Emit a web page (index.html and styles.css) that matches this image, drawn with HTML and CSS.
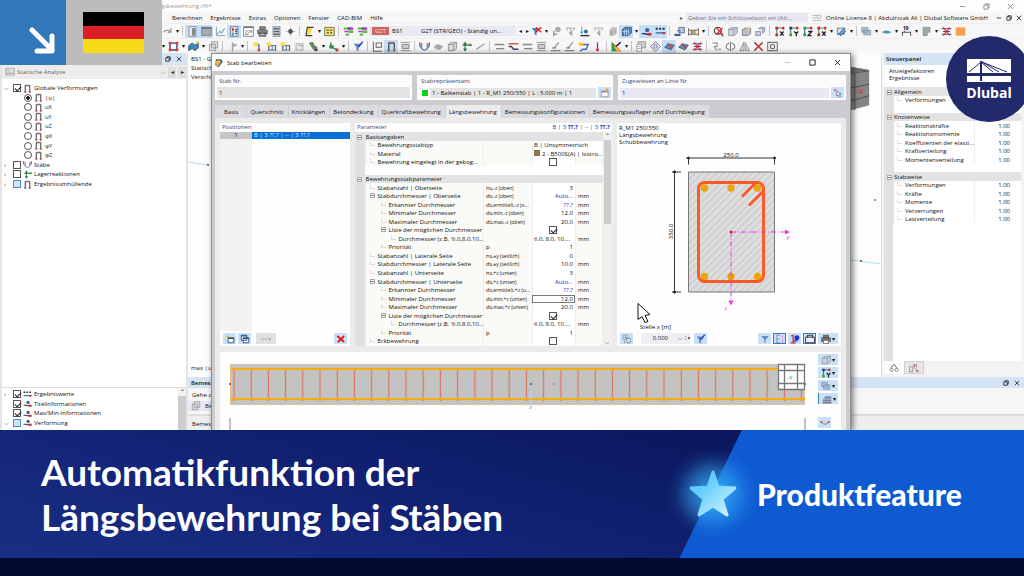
FILE: index.html
```html
<!DOCTYPE html>
<html lang="de">
<head>
<meta charset="utf-8">
<meta name="viewport" content="width=device-width, initial-scale=1">
<title>Automatikfunktion der Längsbewehrung bei Stäben</title>
<link rel="stylesheet" href="styles.css">
</head>
<body>
<div class="app">
  <header class="titlebar">
    <span class="file">gsbewehrung.rf6*</span>
    <span class="win-controls big"><button aria-label="Minimieren" data-icon="min"></button><button aria-label="Wiederherstellen" data-icon="restore"></button><button aria-label="Schließen" data-icon="close"></button></span>
  </header>
  <nav class="menubar">
    <a href="#">Berechnen</a><a href="#">Ergebnisse</a><a href="#">Extras</a><a href="#">Optionen</a><a href="#">Fenster</a><a href="#">CAD-BIM</a><a href="#">Hilfe</a>
    <span class="search-mark">▸</span>
    <input class="search" aria-label="Suche" value="Geben Sie ein Schlüsselwort ein (Alt...">
    <span class="ico" data-icon="find"></span>
    <span class="license">Online License 8 | Abdulrzzak Ali | Dlubal Software GmbH</span>
    <span class="win-controls"><button aria-label="Minimieren" data-icon="min"></button><button aria-label="Wiederherstellen" data-icon="restore"></button><button aria-label="Schließen" data-icon="close"></button></span>
  </nav>
  <div class="toolbar" id="toolbar-a"></div>
  <div class="toolbar" id="toolbar-b"></div>

  <main class="workspace">
    <aside class="navigator">
      <div class="dock-head"><button aria-label="Andocken" data-icon="restore"></button><button aria-label="Schließen" data-icon="close"></button></div>
      <div class="nav-select"><span class="ico" data-icon="disk"></span><span class="grow">Statische Analyse</span><span class="chev">⌵</span><button aria-label="Zurück">◂</button><button aria-label="Weiter">▸</button></div>
      <ul class="tree" id="tree-results"></ul>
      <div class="tree-lower">
        <ul class="tree" id="tree-display"></ul>
        <div class="vscroll"><span>⌃</span><i></i></div>
      </div>
    </aside>

    <section class="stage">
      <div class="view-row">
        <div class="viewport">
          <p class="view-info">BS1 - GZT<br>Statische<br>Verschieb.</p>
          <svg class="cube" viewBox="0 0 40 48"><path d="M0 2l22-2 18 3v37L10 48H0z" fill="#858585"/><path d="M0 10l25-4 15-2M0 24l26-3 14-3M0 38l26-4 14-4M25 5v40" stroke="#4c4c4c" fill="none"/><path d="M0 2l22-2 18 3-14 3H0z" fill="#6c6c6c"/><text x="27" y="28" font-size="8" fill="#d22">-X</text></svg>
          <svg class="member-left" viewBox="0 0 24 6"><path d="M0 1l20 3" stroke="#a9e3e8"/><circle cx="20" cy="4" r="1" fill="#555"/></svg>
          <svg class="member-right" viewBox="0 0 30 70"><path d="M0 62l30 4" stroke="#a9e3e8"/><circle cx="24" cy="2" r="1" fill="#777"/><circle cx="10" cy="63" r="1" fill="#555"/></svg>
          <p class="view-max">max |u|</p>
        </div>
        <aside class="panel">
          <h2>Steuerpanel</h2>
          <p>Anzeigefaktoren<br>Ergebnisse</p>
          <div class="factor-area"><table class="factors"><colgroup><col class="c-gut"><col><col class="c-num"></colgroup><tbody id="factors"></tbody></table></div>
          <div class="panel-tabs"><button class="on" aria-label="Faktoren" data-icon="scale"></button><button aria-label="Filter" data-icon="filtertab"></button></div>
        </aside>
      </div>
      <section class="results">
        <div class="results-head"><b>Bemessung</b><span><button aria-label="Andocken" data-icon="restore"></button><button aria-label="Schließen" data-icon="close"></button></span></div>
        <p>Gehe zu</p>
        <p class="results-select"><span class="ico" data-icon="copy"></span>Beton</p>
        <p class="results-foot">Bemessung</p>
      </section>
    </section>
  </main>

  <div class="dialog" role="dialog" aria-labelledby="dlg-title">
    <div class="dlg-title"><span class="ico" data-icon="member"></span><span class="grow" id="dlg-title">Stab bearbeiten</span><span class="win-controls dlg-controls"><button class="dim" aria-label="Minimieren" data-icon="min"></button><button aria-label="Maximieren" data-icon="max"></button><button aria-label="Schließen" data-icon="close"></button></span></div>
    <div class="dlg-body">
      <div class="fields">
        <div class="field"><label for="f-no">Stab Nr.</label><div><input id="f-no" value="1" readonly></div></div>
        <div class="field"><label for="f-rep">Stabrepräsentant</label><div><i class="swatch green"></i><input id="f-rep" value="1 - Balkenstab | 1 - R_M1 250/350 | L : 5.000 m | 1" readonly><button class="tool" aria-label="Bearbeiten" data-icon="edit"></button></div></div>
        <div class="field"><label for="f-line">Zugewiesen an Linie Nr.</label><div><input class="active" id="f-line" value="1"><button class="tool" aria-label="Auswählen" data-icon="pick"></button></div></div>
      </div>
      <div class="tabs" role="tablist"><button>Basis</button><button>Querschnitt</button><button>Knicklängen</button><button>Betondeckung</button><button>Querkraftbewehrung</button><button class="on">Längsbewehrung</button><button>Bemessungskonfigurationen</button><button>Bemessungsauflager und Durchbiegung</button></div>
      <div class="tab-page">
        <div class="columns">
          <section class="box positions">
            <h3>Positionen</h3>
            <div class="pos-list"><div class="pos-row"><span>1</span><b>B | 3 ??.? | -- | 3 ??.?</b></div></div>
            <div class="tools"><button class="tool" aria-label="Neu" data-icon="new"></button><button class="tool" aria-label="Kopieren" data-icon="windows"></button><button class="tool off" aria-label="Zuordnen">⊷ ▾</button><button class="tool end" aria-label="Löschen" data-icon="redx"></button></div>
          </section>
          <section class="box params">
            <h3>Parameter<span>B | 3 <b>??.?</b> | -- | 3 <b>??.?</b></span></h3>
            <div class="param-area">
              <table class="param-table"><colgroup><col class="c-gut"><col><col class="c-sym"><col class="c-val"><col class="c-unit"></colgroup><tbody id="params"></tbody></table>
              <div class="vscroll tall"><span>⌃</span><i></i><span class="down">⌵</span></div>
            </div>
          </section>
          <section class="box section">
            <p>R_M1 250/350<br>Längsbewehrung<br>Schubbewehrung</p>
            <svg class="drawing" viewBox="0 -1 224 176">
              <defs><pattern id="hatch" width="5" height="5" patternUnits="userSpaceOnUse" patternTransform="rotate(45)"><path fill="#d3d3d3" d="M0 0h5v5H0z"/><path stroke="#f0f0f0" d="M1 0v5"/></pattern></defs>
              <path fill="url(#hatch)" stroke="#777" d="M71.500 24.500h86v120h-86z"/>
              <g stroke="#333" fill="#111"><path fill="none" d="M69 10.500h90M71.500 10v7M157.500 10v7M57.500 23v123M55 24.500h9M55 144.500h9"/><circle cx="71.500" cy="10.500" r="1"/><circle cx="157.500" cy="10.500" r="1"/><circle cx="57.500" cy="24.500" r="1"/><circle cx="57.500" cy="144.500" r="1"/></g>
              <g fill="#eaa50b"><circle cx="87.500" cy="40.500" r="3.700"/><circle cx="114" cy="40.500" r="3.700"/><circle cx="140.500" cy="40.500" r="3.700"/><circle cx="87.500" cy="129" r="3.700"/><circle cx="114" cy="129" r="3.700"/><circle cx="140.500" cy="129" r="3.700"/></g>
              <g fill="none" stroke="#fb5a2d" stroke-width="3"><rect x="81.500" y="35" width="65" height="99" rx="6"/><path d="M138 36l-13 13M146 44l-14 14"/></g>
              <g stroke="#e838dc" fill="#e838dc"><path stroke-dasharray="5 2 1 2" fill="none" d="M114 84.500h55M114 84v70"/><path stroke="none" d="M168 82l5 2.500-5 2.500zM111.500 153h5l-2.500 5z"/></g>
              <circle cx="114" cy="84.500" r="1.300" fill="#e00"/>
              <g font-size="6" text-anchor="middle"><text x="114" y="9">250.0</text><text transform="translate(56 84) rotate(-90)">350.0</text><g fill="#e838dc"><text x="171" y="91">y</text><text x="109" y="162">z</text></g></g>
              <path d="M21 156v16l4-3 3 6 3-1-3-6 5-1z" fill="#fff" stroke="#111"/>
            </svg>
            <label for="pos-x">Stelle x [m]</label>
            <div class="tools"><button class="tool" aria-label="Ansicht" data-icon="view"></button><span class="spin"><input id="pos-x" value="0.000"><span>⌵ ⁝ ▸</span></span><button class="tool" aria-label="Filter" data-icon="funnelpen"></button><button class="tool end" aria-label="Filtern" data-icon="funnel"></button><button class="tool on" aria-label="Bemaßung" data-icon="dims"></button><button class="tool" aria-label="Info" data-icon="info"></button><button class="tool on" aria-label="Ausgabe" data-icon="box"></button><button class="tool wide" aria-label="Drucken" data-icon="print"></button></div>
          </section>
        </div>
        <section class="box beam">
          <svg class="beam-drawing" viewBox="0 0 594 80">
            <defs><pattern id="stirrups" x="4" y="0" width="17.200" height="40" patternUnits="userSpaceOnUse"><path d="M10 0v40" stroke="#dc7a60" stroke-width="1.300"/></pattern></defs>
            <path d="M10.500 12.500h574v40h-574z" fill="#c3c3c3" stroke="#e5bd92"/>
            <path d="M11 16h574v33H11z" fill="url(#stirrups)"/>
            <path d="M11 17h574M11 47h574" stroke="#f5ad09" stroke-width="2"/>
            <path d="M9 31h2v2H9zM584 31h2v2h-2zM333 31h1v2h-1z" fill="#e8492a"/><path d="M310 31h2v2h-2z" fill="#4a8c2a"/><path d="M311 34v20" stroke="#a9d4f5"/><path d="M10 66v14M585 66v14" stroke="#888"/>
            <text x="309" y="57" font-size="6" fill="#4a9ad9">z</text>
            <path d="M558.500 12.500h26v25h-26zM564.500 12.500v25M577.500 12.500v25M558.500 18.500h26M558.500 31.500h26" fill="#fff" stroke="#777" stroke-width="1.300"/><text x="567" y="28" font-size="6" fill="#268a36">-Y</text>
          </svg>
          <div class="beam-tools"><button class="tool wide" aria-label="Ansicht" data-icon="cube"></button><button class="tool wide" aria-label="Achse" data-icon="axisY"></button><button class="tool wide" aria-label="Darstellung" data-icon="layers"></button><button class="tool wide edge" aria-label="Fläche" data-icon="surface"></button><button class="tool last" aria-label="Verlauf" data-icon="arc"></button></div>
        </section>
      </div>
    </div>
  </div>

  <div class="corner"><div class="corner-arrow"><svg viewBox="0 0 28 28"><path d="M4 3l20 20M24 9v15H9" fill="none" stroke="#fff" stroke-width="5" stroke-linecap="round" stroke-linejoin="round"/></svg></div><div class="corner-flag"><div class="flag"></div></div></div>
  <div class="logo"><svg viewBox="0 0 44 24"><path fill="#fff" d="M0 0h44v14H0zM0 17h44v6H0z"/><path stroke="#232a6c" fill="none" d="M2 13L14 3l12 10M15 3l25 10M15 3l17 10"/><path fill="#232a6c" d="M13 2h2v20h-2z"/></svg><strong>Dlubal</strong></div>
</div>

<footer class="banner">
  <h1>Automatikfunktion der<br>Längsbewehrung bei Stäben</h1>
  <div class="feature">
    <svg class="star" viewBox="0 0 100 100"><defs><radialGradient id="glow"><stop offset="0" stop-color="#38b6ff" stop-opacity=".9"/><stop offset=".5" stop-color="#38b6ff" stop-opacity=".45"/><stop offset=".8" stop-color="#38b6ff" stop-opacity=".1"/><stop offset="1" stop-color="#38b6ff" stop-opacity="0"/></radialGradient><linearGradient id="sg" x2="1" y2="1"><stop offset="0.300" stop-color="#62cbff"/><stop offset="1" stop-color="#d8f6ff"/></linearGradient></defs><circle cx="50" cy="50" r="46" fill="url(#glow)"/><path d="M50 28l5 15 17 1-13 11 5 16-14-9-14 9 5-16-13-11 17-1z" fill="url(#sg)" stroke="url(#sg)" stroke-width="3" stroke-linejoin="round"/></svg>
    <strong>Produktfeature</strong>
  </div>
</footer>
<div class="strip"></div>
<script src="app.js"></script>
</body>
</html>
```
FILE: styles.css
```css
* { box-sizing: border-box; }
html, body { height: 100%; margin: 0; }
body { display: flex; flex-direction: column; overflow: hidden; font: 6px/8px "Open Sans", "Noto Sans", sans-serif; color: #111; }
p, h1, h2, h3, ul { margin: 0; padding: 0; }
button, input { font: inherit; color: inherit; border: 0; padding: 0; margin: 0; background: none; }
a { color: inherit; text-decoration: none; }
svg { display: block; }
.grow { flex: 1; }
.ico { display: inline-flex; }
.ico svg, button svg { width: 10px; height: 10px; }

.app { position: relative; flex: 1; min-height: 0; display: flex; flex-direction: column; overflow: hidden; background: #f7f7f7; }
.titlebar { display: flex; justify-content: space-between; align-items: center; height: 12px; padding-left: 161px; background: #fdfdfd; color: #999; }
.win-controls { display: flex; gap: 4px; }
.win-controls svg { width: 6px; height: 6px; }
.win-controls.big { gap: 17px; padding-right: 10px; color: #888; }
.win-controls.big svg { width: 7px; height: 7px; }
.dlg-controls { gap: 18px; padding-right: 9px; }
.dlg-controls svg { width: 7px; height: 7px; }
.dim { color: #bbb; }
.menubar { display: flex; align-items: center; height: 11px; padding: 0 2px 0 172px; gap: 8px; }
.menubar .search-mark { margin-left: auto; color: #666; }
.search { width: 122px; height: 9px; margin-left: -5px; padding-left: 2px; background: #e8e8f4; color: #777; }
.menubar .ico { margin: 0 -4px; }
.toolbar { display: flex; align-items: center; height: 15px; padding-left: 160px; border-top: 1px solid #f0f0f0; }
.toolbar .tb { display: flex; flex: none; justify-content: center; align-items: center; width: 14px; height: 13px; }
.toolbar .tb svg { width: 11px; height: 11px; }
.toolbar .tb.on { background: #c5dff7; }
.toolbar .dd { flex: none; width: 6px; text-align: center; }
.toolbar .sep { flex: none; width: 1px; height: 10px; margin: 0 2px; background: #c4c4c4; }
.combo { display: flex; flex: none; align-items: center; width: 160px; height: 10px; padding-left: 3px; gap: 3px; background: #e9e9f5; white-space: nowrap; }
.combo i { padding: 0 3px; background: #cf6560; color: #f6dedc; font-style: normal; line-height: 8px; }
.combo .case { width: 26px; }
.combo .arrows { display: flex; gap: 4px; margin-left: auto; padding-left: 3px; background: #f7f7f7; }

.workspace { flex: 1; display: flex; min-height: 0; background: #ededed; }
.navigator { display: flex; flex-direction: column; width: 188px; padding: 0 2px; background: #e4e4e4; }
.dock-head { display: flex; justify-content: flex-end; align-items: center; gap: 5px; height: 12px; padding-right: 4px; background: #d5e4f4; }
.dock-head svg, .results-head svg { width: 6px; height: 6px; }
.nav-select { display: flex; align-items: center; gap: 2px; height: 14px; padding-left: 3px; background: #ececec; color: #666; }
.nav-select button { width: 8px; height: 11px; background: #ddd; color: #222; }
.tree { list-style: none; background: #fff; padding: 4px 0 0 2px; }
.tree li { display: flex; align-items: center; height: 10px; gap: 3px; }
.tree li:nth-child(5n+2), .tree li:nth-child(5n+4) { height: 9px; }
.tree li.child { padding-left: 11px; }
.tree label { display: flex; align-items: center; gap: 2px; }
.tree .ico { width: 9px; }
.tree .ico svg { width: 9px; height: 9px; }
.tree small { font-size: 5px; }
.tree .tw { width: 6px; color: #222; }
#tree-results { flex: 1; }
.tree-lower { display: flex; height: 43px; border-top: 1px solid #ddd; background: #fff; }
.tree-lower .tree { flex: 1; padding-top: 1px; }
input[type=checkbox], input[type=radio] { appearance: none; flex: none; width: 8px; height: 8px; border: 1px solid #555; background: #fff; }
input[type=radio] { border-radius: 50%; }
input[type=radio]:checked { background: radial-gradient(#222 40%, #fff 50%); }
input[type=checkbox]:checked::before { content: ""; display: block; width: 5px; height: 3px; margin: 1px 0 0 1px; border: solid #222; border-width: 0 0 1px 1px; transform: rotate(-45deg); }
input[type=checkbox].blue { background: #cfe4f8; border-color: #4d8cc4; }
.vscroll { display: flex; flex-direction: column; align-items: center; width: 8px; background: #f1f1f1; }
.vscroll i { width: 8px; height: 40px; background: #cdcdcd; }
.vscroll.tall { width: 9px; }
.vscroll.tall i { height: 84px; width: 7px; }
.vscroll .down { margin-top: auto; }

.stage { flex: 1; display: flex; flex-direction: column; min-width: 0; }
.view-row { flex: 1; display: flex; min-height: 0; }
.viewport { position: relative; flex: 1; background: #fdfdfe; overflow: hidden; }
.view-info { width: 23px; padding: 2px 0 2px 3px; line-height: 9px; white-space: nowrap; overflow: hidden; }
.cube { position: absolute; top: 14px; right: 11px; width: 40px; height: 46px; }
.member-left { position: absolute; left: 0; top: 108px; width: 24px; }
.member-right { position: absolute; right: 0; top: 145px; width: 30px; }
.view-max { position: absolute; left: 3px; bottom: 5px; }
.panel { display: flex; flex-direction: column; width: 143px; padding: 0 3px 0 2px; background: #f3f3f3; border-left: 1px solid #ddd; }
.panel h2 { padding: 2px 2px; background: #d5e4f4; font-size: 6px; line-height: 8px; font-weight: 600; }
.panel p { height: 22px; padding: 3px 5px; background: #fff; line-height: 7px; }
.factor-area { flex: 1; background: linear-gradient(90deg, #e0e0e0 9px, #fff 9px); }
table { border-collapse: collapse; table-layout: fixed; width: 100%; }
td { padding: 0; overflow: hidden; white-space: nowrap; line-height: 8px; }
.c-gut { width: 10px; }
.c-num { width: 46px; }
tr { height: 9px; }
tr:nth-child(even) { height: 8px; }
.factors .num { padding-right: 11px; text-align: right; border-left: 1px solid #eee; }
.factors .lvl { padding-left: 11px; }
tr.head td { background: #e3e3e3; }
tr td:first-child { background: #e0e0e0; text-align: center; }
.panel-tabs { display: flex; height: 16px; padding-bottom: 3px; }
.panel-tabs button { display: flex; align-items: center; justify-content: center; width: 20px; background: #e6e6e6; border: 1px solid #d0d0d0; }
.panel-tabs .on { background: #fff; border-color: #fff; }
.results { height: 53px; background: #f6f6f6; }
.results-head { display: flex; justify-content: space-between; align-items: center; height: 11px; padding: 0 4px 0 3px; background: #d5e4f4; }
.results-head b { font-weight: 600; }
.results-head span { display: flex; gap: 5px; }
.results p { padding: 3px 4px; height: 13px; }
.results .results-select { display: flex; align-items: center; width: 200px; gap: 4px; height: 10px; padding: 0 3px; background: #e8e8f5; }
.results .results-foot { height: 16px; margin-top: 3px; padding: 4px 4px 0; border-top: 2px solid #ddd; background: #eee; }

.dialog { position: absolute; left: 211px; right: 173px; top: 53px; bottom: 0; display: flex; flex-direction: column; border: solid #8f8f8f; border-width: 1px 1px 0; background: #ccccd0; box-shadow: 2px 1px 6px #0008; }
.dlg-title { display: flex; align-items: center; height: 17px; padding-left: 2px; gap: 3px; background: #fefefe; }
.dlg-body { flex: 1; display: flex; flex-direction: column; padding: 4px 4px 0 3px; min-height: 0; }
.fields { display: grid; grid-template-columns: 197px 196px 1fr; gap: 5px; }
.field { height: 25px; padding: 2px; background: #fcfcfd; }
.field label { display: block; padding-left: 2px; color: #3a4a78; line-height: 9px; }
.field div { display: flex; align-items: center; gap: 2px; height: 11px; margin-top: 1px; background: #e4e4e4; }
.field div:has(.tool) { background: none; }
.field input { flex: 1; min-width: 0; height: 10px; padding-left: 2px; background: #e4e4e4; }
.field .active { background: #e8e8f5; }
.swatch { display: inline-block; width: 6px; height: 6px; margin-right: 2px; }
.swatch.green { background: #0bd01c; margin: 0 0 0 3px; }
.swatch.brown { background: #8d7556; }
.tabs { display: flex; margin-top: 5px; height: 13px; }
.tabs button { padding: 0 4px 0 3px; white-space: nowrap; border-right: 1px solid #d0d0d4; background: #dcdce0; line-height: 12px; }
.tabs button:first-child { padding: 0 8px 0 9px; }
.tabs .on { background: #ececec; }
.tab-page { flex: 1; display: flex; flex-direction: column; gap: 6px; min-height: 0; padding: 5px 5px 0; background: #ebebec; }
.columns { display: grid; grid-template-columns: 130px 257px 1fr; gap: 5px; height: 223px; }
.box { background: #fefefe; min-width: 0; }
.box h3 { display: flex; justify-content: space-between; padding: 0 2px; height: 9px; color: #3a4a78; font-size: 6px; font-weight: 400; line-height: 9px; }
.box h3 b { color: #2525c8; }
.positions { display: flex; flex-direction: column; }
.pos-list { flex: 1; background: linear-gradient(90deg, #f2f2f2 32px, #fefefe 32px); }
.pos-row { display: flex; line-height: 7px; }
.pos-row span { width: 32px; text-align: center; background: #c5c5c5; }
.pos-row b { flex: 1; padding-left: 2px; background: #0870d4; color: #dcecfb; font-weight: 400; }
.tools { display: flex; align-items: center; gap: 2px; height: 15px; padding: 0 3px; }
.tool { display: inline-flex; align-items: center; justify-content: center; width: 13px; height: 11px; background: #c9e0f6; }
.tool.on { border: 1px solid #3c7db8; }
.tool.edge { border-left: 1px solid #3c7db8; }
.tool.off { width: 20px; margin-left: 3px; background: #e0e0e0; color: #aaa; }
.tool.end { margin-left: auto; }
.tool.wide { width: 20px; gap: 1px; }
.params { display: flex; flex-direction: column; }
.param-area { display: flex; flex: 1; }
.param-table { flex: 1; }
.c-sym { width: 49px; }
.c-val { width: 43px; }
.c-unit { width: 27px; }
.param-table td { background: #fafaf6; border-right: 1px solid #eee; }
.param-table td:first-child { background: #e0e0e0; }
.param-table tr.head td { background: #e3e3e3; border-color: #e3e3e3; }
.param-table .gap td { background: #fefefe; border-color: #fefefe; }
.param-table .gap td:first-child { background: #e0e0e0; }
.param-table .val { padding-right: 2px; text-align: right; background: #fff; }
.param-table .val.left { padding: 0 0 0 1px; text-align: left; }
.param-table .val.mid { text-align: center; }
.param-table .val.auto { color: #2525c8; }
.param-table .val.focus { outline: 1px solid #777; outline-offset: -1px; }
.param-table .unit { padding-left: 2px; }
.param-table .sym { padding-left: 2px; }
.sym small { font-size: 5px; }
.param-table input { display: block; margin: 0 auto; }
.l1 { padding-left: 12px; }
.l2 { padding-left: 23px; }
.l3 { padding-left: 33px; }
.twig, .plus { display: inline-block; width: 5px; height: 5px; margin: 1px 3px 0 -8px; vertical-align: top; }
.twig { height: 4px; border-left: 1px solid #ddd; border-bottom: 1px solid #ddd; }
.plus { border: 1px solid #aaa; background: linear-gradient(#777, #777) center / 3px 1px no-repeat #fff; }
td:first-child .plus { margin: 2px 0 0; }
.section { display: flex; flex-direction: column; }
.section p { padding: 2px 2px 0; line-height: 7px; }
.drawing { flex: 1; min-height: 0; width: 100%; }
.section label { padding-left: 23px; }
.section .spin { display: flex; justify-content: space-between; width: 49px; height: 11px; margin: 0 2px 0 6px; background: #eeeef4; line-height: 11px; }
.spin input { width: 27px; text-align: right; }
.spin span { white-space: nowrap; }
.beam { display: flex; flex: 1; min-height: 0; overflow: hidden; }
.beam-drawing { flex: 1; min-width: 0; height: 80px; }
.beam-tools { display: flex; flex-direction: column; gap: 2px; width: 27px; padding: 2px 0 0 4px; }
.beam-tools .tool { flex: none; }
.beam-tools .last { margin-top: 11px; }

.corner { position: absolute; left: 0; top: 0; display: flex; height: 65px; }
.corner-arrow { display: flex; align-items: flex-end; justify-content: flex-end; width: 66px; padding: 10px; background: #3277b9; }
.corner-arrow svg { width: 28px; }
.corner-flag { width: 96px; padding: 12px 18px 12px 17px; background: #bcbcbc; }
.flag { height: 41px; background: linear-gradient(#000 33%, #dc1f26 33% 66%, #f8d916 66%); }
.logo { position: absolute; right: -8px; top: 36px; display: flex; flex-direction: column; align-items: center; width: 86px; height: 86px; padding-top: 23px; border-radius: 50%; background: #232a6c; color: #fff; }
.logo svg { width: 44px; height: 24px; }
.logo strong { font-size: 14px; line-height: 20px; }

.banner { display: flex; align-items: center; justify-content: space-between; height: 128px; padding-left: 41px; background: linear-gradient(15deg, #192f84 0%, #14267a 30%, #0c1a63 70%, #081352 100%); color: #fff; font-family: Lato, sans-serif; }
.banner h1 { font-size: 37px; line-height: 45px; font-weight: 700; white-space: nowrap; }
.feature { display: flex; align-items: center; width: 345px; height: 128px; background: linear-gradient(116deg, #0000 56px, #0e5ad1 57px); }
.feature strong { font-size: 30px; line-height: 36px; font-weight: 900; }
.star { width: 100px; height: 100px; margin: 0 -6px 0 -16px; }
.strip { height: 18px; background: #040b33; }
```
FILE: app.js
```js
const icons = {
  min: '<path d="M2 8h12" stroke="currentColor" stroke-width="2"/>',
  restore: '<path d="M2 5h9v9H2zM5 5V2h9v9h-3" fill="none" stroke="currentColor" stroke-width="2"/>',
  max: '<path d="M2 2h12v12H2z" fill="none" stroke="currentColor" stroke-width="2"/>',
  close: '<path d="M2 2l12 12M14 2L2 14" stroke="currentColor" stroke-width="2"/>',
  find: '<path d="M1 4h7M1 8h6M1 12h14" stroke="#999"/><circle cx="11" cy="6" r="3" fill="none" stroke="#888"/>',
  redo: '<path d="M2 9q5-5 10-1M13 3v6H8" fill="none" stroke="#888" stroke-width="1.500"/>',
  nav: '<path d="M3 1h10v14H3z" fill="#f6f6f6" stroke="#667"/><path d="M7 3h5v11H7z" fill="#83888f"/>',
  table: '<path d="M1 2h14v12H1z" fill="#b4b4b4" stroke="#667"/><path d="M1 3h14" stroke="#567" stroke-width="2"/><path d="M1 7h14M1 11h14M6 3v11M11 3v11" stroke="#999"/>',
  chart: '<path d="M2 1v13h13" fill="none" stroke="#778"/><path d="M3 12l4-4 3 2 4-7" fill="none" stroke="#58a6d8" stroke-width="1.500"/>',
  panel: '<path d="M2 1h11v14H2z" fill="#e8eef5" stroke="#557"/><path d="M4 3h3v4H4z" fill="#d33"/><path d="M4 7h3v3H4z" fill="#eb3"/><path d="M4 10h3v4H4z" fill="#39c"/><path d="M9 5h3M9 8h3M9 11h3" stroke="#457" stroke-width="2"/>',
  script: '<path d="M1 1h14v14H1z" fill="#fff" stroke="#555"/><path d="M1 2h14" stroke="#777" stroke-width="2"/><path d="M4 6l2 2-2 2M8 6l2 2-2 2M12 6v4M3 12h5" fill="none" stroke="#333"/>',
  server: '<path d="M3 1h10v14H3z" fill="#ddd" stroke="#567"/><path d="M4 4h8M4 8h8M4 12h8" stroke="#567" stroke-width="2"/>',
  printer: '<path d="M4 1h8v4H4zM1 6h14v5H1zM3 10h10v5H3z" fill="#888" stroke="#444"/><path d="M5 12h6" stroke="#fff"/>',
  move: '<path d="M8 1v14M1 8h14" stroke="#999"/><circle cx="8" cy="8" r="3.500" fill="#555"/>',
  load: '<path d="M4 2h10M2 14h10M11 2L5 14M5 2L3 13" stroke="#444" fill="none" stroke-width="2"/><path d="M6 3h6L8 13H4z" fill="#fd3"/>',
  grid: '<path d="M1 2h14v12H1z" fill="#fbe36b" stroke="#444"/><path d="M4 6h3M9 6h3M4 10h3M9 10h3" stroke="#444" stroke-width="2"/>',
  flag: '<path d="M1 2h8v3H1zM8 6h7v4H8zM4 11h5v3H4z" fill="#5bbd50"/><path d="M7 2h7v3H7z" fill="#348"/><path d="M9 4h6M2 8h6" stroke="#d2c" stroke-width="2"/>',
  funnelx: '<path d="M1 3h11L8 8v6l-3-2V8z" fill="#4b81c2"/><path d="M7 2l8 7M15 2L7 9" stroke="#e22" stroke-width="2"/>',
  gball: '<path d="M4 15V7M3 12h6" stroke="#999" stroke-width="2"/><circle cx="10" cy="5" r="4" fill="#aaa"/>',
  supports: '<path d="M1 3h14M3 3v4M8 3v4M13 3v4M6 10l4-3v7z" stroke="#999" fill="#aaa"/>',
  download: '<path d="M2 14h13" stroke="#333" stroke-width="2"/><path d="M4 1v10M2 8l2 3 2-3" stroke="#27b" fill="none"/><circle cx="10" cy="8" r="3" fill="#37a"/>',
  cube: '<path d="M2 5l5-3h8v8l-5 4H2zM2 5h8v9M10 5l5-3" fill="#cdd2dc" stroke="#7c85a0"/>',
  cubeblue: '<path d="M2 5l4-3h9v8l-4 4H2z" fill="#5486b8" stroke="#235"/><path d="M2 8h9M5 5v9M8 5v9M11 5v9" stroke="#bdf" />',
  stepblue: '<path d="M1 11h4l3 1h7" stroke="#236" stroke-width="2" fill="none"/><circle cx="9" cy="6" r="3" fill="#3c5f9a"/><path d="M10 10h5v4h-5z" fill="#c33"/>',
  values: '<path d="M1 4h3M6 4h3M11 4h3" stroke="#234" stroke-width="3"/><path d="M1 10h14" stroke="#37a" stroke-width="2"/><path d="M11 9h4v3h-4z" fill="#c33"/>',
  monitor: '<path d="M7 2h8v8H7z" fill="#bcd" stroke="#347"/><path d="M1 12h8v2H1zM4 7h6" stroke="#347" fill="#27b"/>',
  dim: '<path d="M1 3v11M15 3v11M1 6h14M1 12h14M5 6v6M10 6v6" stroke="#333"/><path d="M6 7h4v4H6z" fill="#c93"/>',
  zoomx: '<circle cx="7" cy="7" r="5" fill="#fff" stroke="#555" stroke-width="2"/><path d="M11 11l4 4" stroke="#555" stroke-width="2"/><path d="M5 3l9 9M14 3L5 12" stroke="#e33" stroke-width="2"/>',
  cubepen: '<path d="M2 5l4-2h8v8l-4 3H2z" fill="#b8bfcc" stroke="#667"/><path d="M8 2l6 1-4 4z" fill="#fc4"/>',
  cubes: '<path d="M1 8h7v6H1zM5 4l3-2h6v6l-3 3V4z" fill="#c9cede" stroke="#6d789c"/>',
  axisX: '<path d="M4 2v12M3 3h11" stroke="#4a8a5a" stroke-width="1.500"/><path d="M2 1h4v4H2zM2 11h4v4H2zM12 1h3v4h-3z" fill="#c22"/><path d="M9 8l5 6M14 8l-5 6" stroke="#223" stroke-width="2"/>',
  axisY: '<path d="M4 2v12M3 3h11" stroke="#2a8a3a" stroke-width="1.500"/><path d="M2 1h4v4H2z" fill="#23a"/><path d="M2 11h4v4H2z" fill="#2a3"/><path d="M12 1h3v4h-3z" fill="#c22"/><path d="M9 8l3 3 3-3M12 11v4" stroke="#223" fill="none" stroke-width="2"/>',
  axisZ: '<path d="M4 2v12M3 3h11" stroke="#258" stroke-width="1.500"/><path d="M2 1h4v4H2zM2 11h4v4H2z" fill="#2a3"/><path d="M12 1h3v4h-3z" fill="#c22"/><path d="M9 8h5l-5 6h5" stroke="#223" fill="none" stroke-width="2"/>',
  plane: '<path d="M2 3h10v9H2z" fill="#dde" stroke="#557"/><path d="M3 13L13 3M6 14l8-7" stroke="#37a" stroke-width="2"/>',
  layers: '<path d="M1 2h9v7H1zM4 6h10v7H4z" fill="#a9bdd3" stroke="#778aa5"/>',
  disc: '<path d="M1 9q6-5 14 0-6 4-14 0" fill="#4b90bf"/>',
  ten: '<path d="M2 14V9h12v5M5 9V7" stroke="#555" fill="none" stroke-width="1.500"/><text x="3" y="6" font-size="7" font-weight="bold">10</text>',
  ghost: '<path d="M3 2h10v7H9v5H3z" fill="#9aa" stroke="#788"/>',
  ghostcube: '<path d="M4 5l4-3h6v8l-4 4H4z" fill="#aaa" stroke="#ccc"/><path d="M4 5h6v9M10 5l4-3" stroke="#eee" fill="none"/>',
  xgrid: '<path d="M1 4h14M1 12h14M3 8h10" stroke="#447" stroke-width="1.500"/><path d="M3 2l10 12M13 2L3 14" stroke="#d33" stroke-width="1.500"/>',
  orange: '<path d="M1 2h14v12H1z" fill="#f6a04f"/>',
  nodes: '<path d="M3 3h10v10H3z" fill="#fff" stroke="#347" stroke-width="2"/><path d="M1 1h4v4H1zM11 1h4v4h-4zM1 11h4v4H1zM11 11h4v4h-4z" fill="#d43"/>',
  solid: '<path d="M1 7l5-4 4 3 5-4v8l-5 4-4-3-5 3z" fill="#3b8ac0" stroke="#235"/><path d="M12 1h3v3h-3z" fill="#fc3"/>',
  copy: '<path d="M5 1h9v9H5zM2 5h9v9H2z" fill="#ddd" stroke="#888"/>',
  pole: '<path d="M8 2v13M8 4l5 2-5 2" stroke="#aaa" stroke-width="2" fill="none"/>',
  pen: '<path d="M2 2h7v6H2z" fill="#fd4"/><path d="M10 4v11" stroke="#57a" stroke-width="2"/><circle cx="10" cy="13" r="2" fill="#c44"/>',
  frame: '<path d="M4 14V7h10v7" stroke="#456" stroke-width="1.500" fill="none"/><path d="M1 2h6v5H1z" fill="#fd4"/><path d="M9 8v6M4 13h10" stroke="#58a" stroke-width="1.500"/>',
  greyframe: '<path d="M3 4h10v9H3zM6 7h7v4" stroke="#aaa" fill="#eee" stroke-width="1.500"/>',
  shell: '<path d="M2 3l5-1 2 5 4 2v5l-6-3z" fill="#5c9a51" stroke="#455"/><path d="M9 13h5" stroke="#333" stroke-width="2"/>',
  green: '<path d="M4 2v6l9 5" stroke="#2e8b3f" stroke-width="2" fill="none"/><path d="M2 6h6v5H2z" fill="#2e8b3f"/><path d="M11 11h4v4h-4z" fill="#c33"/>',
  funnelpen: '<path d="M1 4h12L8 9v6l-3-2V9z" fill="#5f86bb"/><path d="M8 9l6-8" stroke="#23c" stroke-width="2"/>',
  funnel: '<path d="M2 3h12L9 9v5H7V9z" fill="#5f8fc2"/>',
  ucs: '<path d="M2 1v14h13M6 3h8v6H6z" stroke="#667" fill="none" stroke-width="1.500"/>',
  portal: '<path d="M4 15V3h8v12" stroke="#555" stroke-width="2" fill="none"/><path d="M4 2h8" stroke="#a44"/><path d="M2 14h4M10 14h4" stroke="#a55" stroke-width="2"/>',
  hbeam: '<path d="M1 2h14M1 14h14M3 5h10v6H3z" stroke="#666" fill="#ccc"/>',
  moment: '<path d="M1 3v4l4 5q3 2 6 0l4-5V3M4 3v6M12 3v6" stroke="#46b" fill="none" stroke-width="1.500"/><path d="M1 2v5M15 2v5" stroke="#d44" stroke-width="2"/>',
  react: '<path d="M6 1v14M2 6h13" stroke="#1e7a35" stroke-width="1.500"/><path d="M3 3h6L6 7zM3 11h6l-3 4zM11 4h4v4z" fill="#1e7a35"/>',
  line: '<path d="M2 12L14 4" stroke="#999" stroke-width="1.500"/>',
  lines: '<path d="M1 5h14M3 11h12" stroke="#888" stroke-width="2"/><path d="M3 3v4M12 9v4" stroke="#aaa"/>',
  linesred: '<path d="M1 4h14" stroke="#d43" stroke-width="2"/><path d="M1 8h4l3 4h7" stroke="#347" stroke-width="2" fill="none"/>',
  slope: '<path d="M1 14h14M5 11l8-9M3 10h6" stroke="#888" fill="none" stroke-width="1.500"/>',
  swoosh: '<path d="M3 5h12l-3 7H7l-4 3" stroke="#46c" fill="none" stroke-width="2"/><path d="M1 2h6v5H1z" fill="#fc3"/>',
  pin: '<path d="M8 2v10" stroke="#93c" stroke-width="2"/><circle cx="8" cy="13" r="2" fill="#d22"/>',
  rainbow: '<path d="M1 1v14h14z" fill="#e33"/><path d="M4 6v9h11z" fill="#fb2"/><path d="M1 1v14h7z" fill="#2a5"/><path d="M7 8l7-6" stroke="#222" stroke-width="2"/>',
  sheet: '<path d="M3 1h11v9H3z" fill="#ccc" stroke="#888"/><path d="M1 5h7v10H1z" fill="#fff" stroke="#888"/><path d="M2 8h5M2 11h5" stroke="#999"/>',
  target: '<path d="M8 1l7 7-7 7-7-7z" fill="#eef" stroke="#347"/><circle cx="8" cy="8" r="2.500" fill="none" stroke="#347"/>',
  planeb: '<path d="M1 9l5-5 9 2-5 7z" fill="#5b91c0" stroke="#246"/><path d="M5 4l7 7" stroke="#d33" stroke-width="2"/>',
  hook: '<path d="M2 3h7v5H5l3 6M10 12h5" stroke="#888" fill="none" stroke-width="1.500"/>',
  rot: '<path d="M6 3q-9 5 0 10M10 3q9 5 0 10M8 1v14" stroke="#777" fill="none" stroke-width="1.500"/>',
  mirror: '<path d="M7 2v12H1zM9 2v12h6z" fill="#ddd" stroke="#777"/>',
  bigx: '<path d="M2 2l12 12M14 2L2 14" stroke="#333" stroke-width="2"/><path d="M4 4l8 8M12 4l-8 8" stroke="#e33" stroke-width="2"/>',
  camera: '<path d="M1 2h14v12H1z" fill="#eee" stroke="#777" stroke-width="1.500"/><circle cx="8" cy="8" r="3" fill="#fff" stroke="#666" stroke-width="1.500"/>',
  disk: '<path d="M1 2h14v11H1z" fill="#ddd" stroke="#999"/><path d="M2 10h12M3 4l4 3" stroke="#888"/>',
  member: '<path d="M3 2h9l2 4-7 9-5-4z" fill="#3a5fa0"/><path d="M2 5l7-2 2 3-6 9z" fill="#f2b62c"/>',
  edit: '<path d="M2 5h11v9H2z" fill="#fff" stroke="#777"/><path d="M2 6h11" stroke="#777" stroke-width="2"/><path d="M9 1h4v5H9z" fill="#e9a23b"/>',
  pick: '<path d="M2 2l3 3M5 2L2 5" stroke="#e33" stroke-width="1.500"/><path d="M6 5v8l2-2 2 4 2-1-2-4h3z" fill="#fff" stroke="#456"/>',
  new: '<path d="M5 6h9v8H5z" fill="#fff" stroke="#357" stroke-width="1.500"/><path d="M5 7h9" stroke="#357" stroke-width="2"/><path d="M4 0l1 3 3 1-3 1-1 3-1-3-3-1 3-1z" fill="#f5c400"/>',
  windows: '<path d="M2 2h9v8H2zM5 6h9v8H5z" fill="#fff" stroke="#357" stroke-width="1.500"/><path d="M5 7h9M2 3h9" stroke="#357" stroke-width="2"/>',
  redx: '<path d="M2 3l11 10M13 3L3 13" stroke="#e81010" stroke-width="3"/>',
  view: '<path d="M2 2h7v7H2z" fill="#fff" stroke="#579"/><path d="M4 4h3v3H4z" fill="#579"/><path d="M7 7h6v7H9z" fill="#fff" stroke="#357"/><path d="M4 11v3h2" stroke="#579" fill="none"/>',
  dims: '<path d="M3 1v14M3 2h5M3 8h4M3 14h5" stroke="#669" fill="none"/><path d="M12 2v4M12 9v5" stroke="#b5b"/>',
  info: '<path d="M2 3l3-1v12M1 14h8" stroke="#d22" stroke-width="2" fill="none"/><circle cx="11" cy="6" r="4" fill="#2430d0"/><path d="M6 11h6" stroke="#2430d0" stroke-width="2"/>',
  box: '<path d="M1 5h14v9H1z" fill="#eef" stroke="#333" stroke-width="1.500"/><path d="M3 2h10M4 2v4M12 2v4" stroke="#333" stroke-width="1.500"/>',
  print: '<path d="M4 2h8v4H4zM1 6h14v6H1z" fill="#777" stroke="#444"/><path d="M4 10h8v5H4z" fill="#fff" stroke="#444"/>',
  surface: '<path d="M1 9l5-6h9v6z" fill="#8a96b5"/><path d="M1 11h14M1 14h14" stroke="#668" stroke-width="2"/>',
  arc: '<path d="M3 7q5 6 10 0" stroke="#556" fill="none"/><path d="M1 5h3v3H1zM12 5h3v3h-3z" fill="#d33"/>',
  scale: '<path d="M4 10V7l4-5 4 5v3" fill="#fff" stroke="#555" stroke-width="1.500"/><circle cx="4" cy="11" r="2.500" fill="#fff" stroke="#555"/><circle cx="12" cy="11" r="2.500" fill="#fff" stroke="#555"/>',
  filtertab: '<path d="M1 6h5v8H1zM8 5l5 9M12 1v6" fill="none" stroke="#999" stroke-width="1.500"/><path d="M7 2h3v3H7zM12 11h3v3h-3z" fill="#d44"/>',
  lens: '<path d="M1 9q3-5 8-4l6 3-5 5-5-1z" fill="#aaa"/>',
  greycube: '<path d="M2 5l4-3h8v9l-4 3H2zM2 5h8v9M10 5l4-3" fill="#ddd" stroke="#777"/>'
};
const svg = name => `<svg viewBox="0 0 16 16" aria-hidden="true">${icons[name]}</svg>`;

/* "v" = drop-down mark, "|" = separator, leading "*" = pressed */
const combo = '<span class="combo"><i>GZT</i><span class="case">BS1</span><span>GZT (STR/GEO) - Ständig un...</span><span class="arrows"><span>◂</span><span>▸</span></span></span>';
const bars = {
  'toolbar-a': 'redo v | *nav *table chart *panel script printer server move | load v grid | flag flag combo funnelx v gball supports download supports ghostcube *cubeblue v *stepblue *values | monitor dim v | zoomx cube cubepen cubes | axisX axisY axisZ axisX v plane v | layers v disc v ten v ghost v xgrid orange',
  'toolbar-b': 'v nodes v solid v copy | pole v | pen frame frame greyframe shell v green v | funnelpen | ucs *portal hbeam | moment lens greycube react line | lines linesred lines hbeam slope slope swoosh pin | rainbow v | sheet target *planeb planeb xgrid | hook rot mirror bigx camera'
};
for (const [id, spec] of Object.entries(bars)) {
  document.getElementById(id).innerHTML = spec.split(' ').map(t => {
    if (t === 'v') return '<span class="dd">▾</span>';
    if (t === '|') return '<span class="sep"></span>';
    if (t === 'combo') return combo;
    const on = t[0] === '*', n = on ? t.slice(1) : t;
    return `<button class="tb${on ? ' on' : ''}" aria-label="${n}">${svg(n)}</button>`;
  }).join('');
}
document.querySelectorAll('[data-icon]').forEach(el => {
  el.innerHTML = svg(el.dataset.icon) + (el.classList.contains('wide') ? '<span>▾</span>' : '');
});

const node = (tw, type, icon, label, attrs = '') =>
  `<li class="${type === 'radio' ? 'child' : ''}"><span class="tw">${tw}</span><label><input type="${type}" name="${type === 'radio' ? 'result' : label}" ${attrs}><span class="ico">${svg(icon)}</span><span>${label}</span></label></li>`;
document.getElementById('tree-results').innerHTML =
  node('⌵', 'checkbox', 'portal', 'Globale Verformungen', 'checked') +
  ['|u|', 'u<small>X</small>', 'u<small>Y</small>', 'u<small>Z</small>', 'φ<small>X</small>', 'φ<small>Y</small>', 'φ<small>Z</small>'].map((l, i) => node('', 'radio', 'portal', l, i ? '' : 'checked')).join('') +
  node('›', 'checkbox', 'moment', 'Stäbe') + node('›', 'checkbox', 'react', 'Lagerreaktionen') + node('›', 'checkbox', 'portal', 'Ergebnisumhüllende', 'class="blue"');
document.getElementById('tree-display').innerHTML =
  node('›', 'checkbox', 'values', 'Ergebniswerte', 'checked') + node('', 'checkbox', 'stepblue', 'Titelinformationen', 'checked') +
  node('', 'checkbox', 'stepblue', 'Max/Min-Informationen', 'checked') + node('⌵', 'checkbox', 'stepblue', 'Verformung', 'class="blue"');

const plus = '<i class="plus"></i>', twig = '<i class="twig"></i>';
const factorRows = ['#Allgemein', '-Verformungen', '', '#Knotenweise', 'Reaktionskräfte', 'Reaktionsmomente', 'Koeffizienten der elasti...', 'Kraftverteilung', 'Momentenverteilung', '', '#Stabweise', 'Verformungen', 'Kräfte', 'Momente', 'Verzerrungen', 'Lastverteilung'];
document.getElementById('factors').innerHTML = factorRows.map(r => {
  if (!r) return '<tr><td></td><td colspan="2"></td></tr>';
  if (r[0] === '#') return `<tr class="head"><td>${plus}</td><td colspan="2">${r.slice(1)}</td></tr>`;
  return `<tr><td></td><td class="lvl">${twig}${r.replace('-', '')}</td><td class="num">${r[0] === '-' ? '' : '1.00'}</td></tr>`;
}).join('');

/* [level, expandable, label, symbol, subscript, value, unit, value class] */
const box = c => `<input type="checkbox" aria-label="Aktiv" ${c ? 'checked' : ''}>`;
const side = (tag, word, focus) => [
  [1, 1, `Stabdurchmesser | ${word}`, 'd', `s,${tag}`, 'Auto...', 'mm', 'auto'],
  [2, 0, 'Erkannter Durchmesser', 'd', `s,ermittelt,${tag.slice(0, 5)}...`, '??.?', 'mm', 'auto'],
  [2, 0, 'Minimaler Durchmesser', 'd', `s,min,${tag}`, '12.0', 'mm', focus ? 'focus' : ''],
  [2, 0, 'Maximaler Durchmesser', 'd', `s,max,${tag}`, '20.0', 'mm', ''],
  [2, 1, 'Liste der möglichen Durchmesser', '', '', box(1), '', 'mid'],
  [3, 0, 'Durchmesser (z.B. \'6.0,8.0,10...', '', '', '6.0, 8.0, 10....', 'mm', 'left'],
  [2, 0, 'Priorität', 'p', '', '1', '', '']
];
const rows = [
  'Basisangaben',
  [1, 0, 'Bewehrungsstabtyp', '', '', 'B | Unsymmetrisch', null, 'left'],
  [1, 0, 'Material', '', '', '<i class="swatch brown"></i>2 - B500S(A) | Isotro...', null, 'left'],
  [1, 0, 'Bewehrung eingelegt in der gebog...', '', '', box(0), '', 'mid'],
  '',
  'Bewehrungsstabparameter',
  [1, 0, 'Stabanzahl | Oberseite', 'n', 's,-z (oben)', '3', '', ''],
  ...side('-z (oben)', 'Oberseite', false),
  [1, 0, 'Stabanzahl | Laterale Seite', 'n', 's,±y (seitlich)', '0', '', ''],
  [1, 0, 'Stabdurchmesser | Laterale Seite', 'd', 's,±y (seitlich)', '10.0', 'mm', ''],
  [1, 0, 'Stabanzahl | Unterseite', 'n', 's,+z (unten)', '3', '', ''],
  ...side('+z (unten)', 'Unterseite', true),
  [1, 0, 'Eckbewehrung', '', '', box(0), '', 'mid']
];
document.getElementById('params').innerHTML = rows.map(r => {
  if (r === '') return '<tr class="gap"><td></td><td colspan="4"></td></tr>';
  if (typeof r === 'string') return `<tr class="head"><td>${plus}</td><td colspan="4">${r}</td></tr>`;
  const [lvl, exp, label, sym, sub, val, unit, cls] = r;
  const end = unit === null ? `<td class="val ${cls}" colspan="2">${val}</td>` : `<td class="val ${cls}">${val}</td><td class="unit">${unit}</td>`;
  return `<tr><td></td><td class="l${lvl}">${exp ? plus : twig}${label}</td><td class="sym">${sym}<small>${sub}</small></td>${end}</tr>`;
}).join('');
```
